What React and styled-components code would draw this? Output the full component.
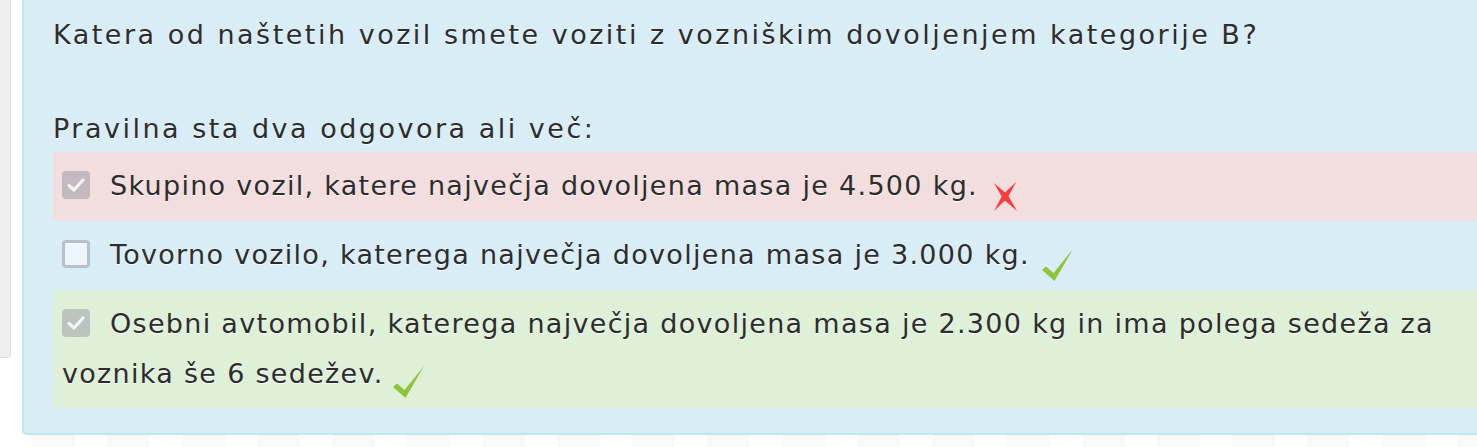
import React from 'react'
import styled, { createGlobalStyle } from 'styled-components'

const GlobalStyle = createGlobalStyle`
    html, body {
        margin: 0;
        padding: 0;
        background: #ffffff;
        overflow: hidden;
    }
    body {
        font-family: "DejaVu Sans", "Liberation Sans", sans-serif;
        color: #2d2d2d;
    }
`

const Page = styled.div`
    display: flex;
    align-items: flex-start;
    gap: 11px;
    width: 1477px;
    height: 447px;
    background: repeating-linear-gradient(90deg, #ffffff 0 32px, #f9f9f9 32px 75px);
`

const SideRail = styled.div`
    flex: none;
    width: 10px;
    height: 357px;
    background: #efefef;
    border-right: 1px solid #dddddd;
    border-bottom: 1px solid #dddddd;
    border-bottom-right-radius: 4px;
`

const QuestionPanel = styled.section`
    flex: 1;
    min-width: 0;
    padding: 11px 0 25px 29px;
    background: #d9edf7;
    border: 2px solid #bce8f1;
    border-top: none;
    border-right: none;
    border-bottom-left-radius: 5px;
    font-size: 27px;
    letter-spacing: 2.5px;
    text-shadow: 0 1px 0 rgba(255, 255, 255, 0.85);
`

const Prompt = styled.p`
    margin: 0;
    line-height: 47px;
    white-space: nowrap;
`

const Answers = styled.ul`
    list-style: none;
    margin: 0;
    padding: 0;
`

const rowColors = {
    wrong: '#f2dede',
    right: '#dff0d8',
    none: 'transparent',
}

const AnswerRow = styled.li`
    padding: 9px 10px 9px 9px;
    line-height: 50px;
    letter-spacing: 1.3px;
    background: ${p => rowColors[p.$state]};
`

const Box = styled.span`
    display: inline-block;
    box-sizing: border-box;
    width: 28px;
    height: 28px;
    margin-right: 20px;
    vertical-align: -4px;
    border-radius: 4px;
    background: ${p => p.$checked ? p.$tint : '#eef5fb'};
    border: ${p => p.$checked ? 'none' : '3px solid #b8c0cb'};
    position: relative;

    svg {
        position: absolute;
        left: 5px;
        top: 6px;
    }
`

const Mark = styled.svg`
    display: inline-block;
    vertical-align: ${p => p.$offset};
    margin-left: ${p => p.$gap};
`

const Checkbox = ({checked, tint}) => (
    <Box $checked={checked} $tint={tint}>
        {checked && (
            <svg width="18" height="16" viewBox="0 0 18 16">
                <path d="M2 8.5 L7 13 L16 3" fill="none" stroke="#f3f3f3" strokeWidth="3.2" strokeLinecap="round" strokeLinejoin="round"/>
            </svg>
        )}
    </Box>
)

// brush-like red cross, two tapered strokes
const Cross = () => (
    <Mark $offset="-17px" $gap="15px" width="25" height="30" viewBox="0 0 25 30">
        <polygon points="1,1 14.8,13.1 24,29 10.2,16.9" fill="#fb3c3c"/>
        <polygon points="23,0 14.4,16.3 1,29 9.6,12.7" fill="#fb3c3c"/>
    </Mark>
)

const Tick = ({gap, offset}) => (
    <Mark $offset={offset} $gap={gap} width="31" height="32" viewBox="0 0 31 32">
        <polygon points="0,21 4,17.5 11.5,24 31,0 12.5,32" fill="#8fc33a"/>
    </Mark>
)

const answers = [
    {text: 'Skupino vozil, katere največja dovoljena masa je 4.500 kg.', checked: true, state: 'wrong', tint: '#c4b9bf', mark: 'cross'},
    {text: 'Tovorno vozilo, katerega največja dovoljena masa je 3.000 kg.', checked: false, state: 'none', mark: 'tick', gap: '12px', offset: '-17px'},
    {text: 'Osebni avtomobil, katerega največja dovoljena masa je 2.300 kg in ima polega sedeža za voznika še 6 sedežev.', checked: true, state: 'right', tint: '#bcc4bf', mark: 'tick', gap: '9px', offset: '-15px'},
]

const App = () => {
    return (
        <>
            <GlobalStyle/>
            <Page>
                <SideRail/>
                <QuestionPanel>
                    <Prompt>Katera od naštetih vozil smete voziti z vozniškim dovoljenjem kategorije B?</Prompt>
                    <Prompt>&nbsp;</Prompt>
                    <Prompt>Pravilna sta dva odgovora ali več:</Prompt>
                    <Answers>
                        {answers.map((item, i) => (
                            <AnswerRow key={i} $state={item.state}>
                                <Checkbox checked={item.checked} tint={item.tint}/>
                                {item.text}
                                {item.mark === 'cross' ? <Cross/> : <Tick gap={item.gap} offset={item.offset}/>}
                            </AnswerRow>
                        ))}
                    </Answers>
                </QuestionPanel>
            </Page>
        </>
    )
}

export default App
